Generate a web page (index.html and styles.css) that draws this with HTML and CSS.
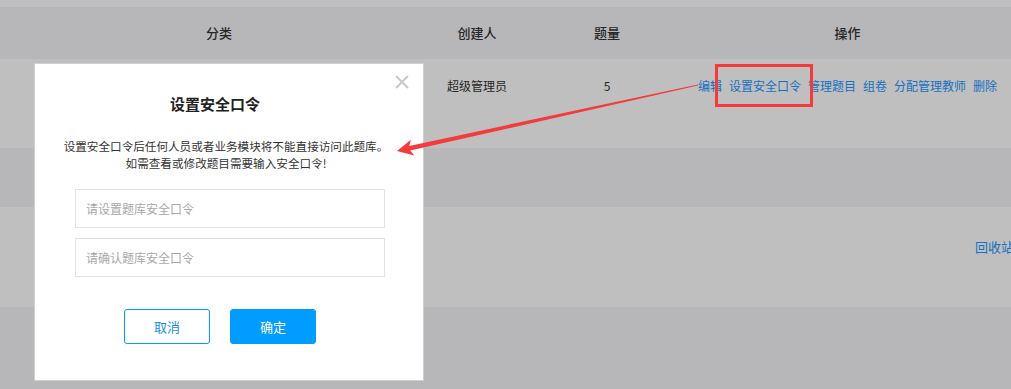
FILE: index.html
```html
<!DOCTYPE html>
<html lang="zh-CN">
<head>
  <meta charset="UTF-8">
  <title>题库管理</title>
  <link rel="stylesheet" href="styles.css">
</head>
<body>
  <div class="page">
    <div class="top-strip"></div>

    <div class="table">
      <div class="row head">
        <div class="cell">分类</div>
        <div class="cell">创建人</div>
        <div class="cell">题量</div>
        <div class="cell">操作</div>
      </div>
      <div class="row data">
        <div class="cell"></div>
        <div class="cell">超级管理员</div>
        <div class="cell">5</div>
        <div class="cell actions">
          <a href="#">编辑</a>
          <a href="#">设置安全口令</a>
          <a href="#">管理题目</a>
          <a href="#">组卷</a>
          <a href="#">分配管理教师</a>
          <a href="#">删除</a>
        </div>
      </div>
    </div>

    <div class="toolbar">
      <a href="#">回收站</a>
    </div>
  </div>

  <div class="mask"></div>

  <div class="dialog">
    <span class="dialog-close">
      <svg width="14" height="14" viewBox="0 0 14 14">
        <path d="M1 1L13 13M13 1L1 13" stroke="#c8c8c8" stroke-width="2" fill="none"/>
      </svg>
    </span>
    <div class="dialog-title">设置安全口令</div>
    <p class="dialog-desc">设置安全口令后任何人员或者业务模块将不能直接访问此题库。<br>如需查看或修改题目需要输入安全口令!</p>
    <input class="dialog-input" type="password" placeholder="请设置题库安全口令">
    <input class="dialog-input" type="password" placeholder="请确认题库安全口令">
    <div class="dialog-btns">
      <button class="btn btn-ghost">取消</button>
      <button class="btn btn-primary">确定</button>
    </div>
  </div>

  <!-- annotation layer -->
  <div class="mark-box"></div>
  <svg class="mark-arrow" width="1011" height="389" viewBox="0 0 1011 389">
    <polygon fill="#f43a3a" points="397,151 414.3,155.4 410.2,150.5 698,85.6 698,84.4 409.2,145.9 410.9,139.8"/>
  </svg>
</body>
</html>
```

FILE: styles.css
```css
:root {
  --bg-page: #f5f5f7;
  --text-main: #333;
  --blue: #1e98ff;
  --blue-btn: #009cff;
  --border-input: #e2e2e2;
}

html, body {
  margin: 0;
  height: 100%;
}

body {
  font-family: "Noto Sans CJK SC", "Noto Sans", sans-serif;
  font-size: 12px;
  color: var(--text-main);
  background-color: var(--bg-page);
  overflow: hidden;
}

.page {
  width: 1011px;
  overflow: hidden;
}

.top-strip {
  height: 7px;
  background: #fff;
}

.row {
  display: grid;
  grid-template-columns: 438px 78px 182px 299px;
}
.row .cell {
  text-align: center;
  white-space: nowrap;
}

.row.head {
  height: 52px;
  line-height: 52px;
  font-size: 13px;
  font-weight: 500;
  color: #353535;
}

.row.data {
  height: 89px;
  background: #fff;
  padding-top: 18px;
  line-height: 18px;
  box-sizing: border-box;
}

.actions {
  display: flex;
  justify-content: center;
  gap: 7px;
}
.actions a,
.toolbar a {
  color: var(--blue);
  text-decoration: none;
}

.toolbar {
  margin-top: 59px;
  height: 100px;
  background: #fff;
  padding: 31px 0 0 975px;
  box-sizing: border-box;
  white-space: nowrap;
  font-size: 13px;
  line-height: 18px;
}

.mask {
  position: fixed;
  inset: 0;
  background: rgba(0, 0, 0, 0.25);
}

.dialog {
  position: fixed;
  left: 34px;
  top: 63px;
  width: 390px;
  height: 318px;
  box-sizing: border-box;
  background: #fff;
  border: 1px solid #cfcfcf;
  padding-top: 30px;
}

.dialog-close {
  position: absolute;
  top: 11px;
  right: 14px;
  width: 14px;
  height: 14px;
  cursor: pointer;
}
.dialog-close svg {
  display: block;
}

.dialog-title {
  text-align: center;
  padding-right: 28px;
  font-size: 15px;
  font-weight: bold;
  line-height: 20px;
  color: #222;
}

.dialog-desc {
  margin: 24px 0 0;
  padding-right: 6px;
  text-align: center;
  font-size: 11.6px;
  line-height: 17px;
}

.dialog-input {
  display: block;
  width: 310px;
  height: 39px;
  box-sizing: border-box;
  margin: 17px 0 0 40px;
  padding: 0 10px;
  border: 1px solid var(--border-input);
  outline: none;
  font-family: inherit;
  font-size: 12px;
}
.dialog-input + .dialog-input {
  margin-top: 10px;
}
.dialog-input::placeholder {
  color: #a8a8a8;
}

.dialog-btns {
  display: flex;
  gap: 20px;
  margin: 32px 0 0 89px;
}

.btn {
  width: 86px;
  height: 35px;
  box-sizing: border-box;
  border-radius: 3px;
  font-family: inherit;
  font-size: 13px;
  cursor: pointer;
}
.btn-ghost {
  background: #fff;
  border: 1px solid var(--blue-btn);
  color: #1a8fe6;
}
.btn-primary {
  background: var(--blue-btn);
  border: 1px solid var(--blue-btn);
  color: #fff;
}

.mark-box {
  position: fixed;
  left: 715px;
  top: 64px;
  width: 98px;
  height: 43px;
  box-sizing: border-box;
  border: 3px solid #f43a3a;
}

.mark-arrow {
  position: fixed;
  left: 0;
  top: 0;
  pointer-events: none;
}
```
